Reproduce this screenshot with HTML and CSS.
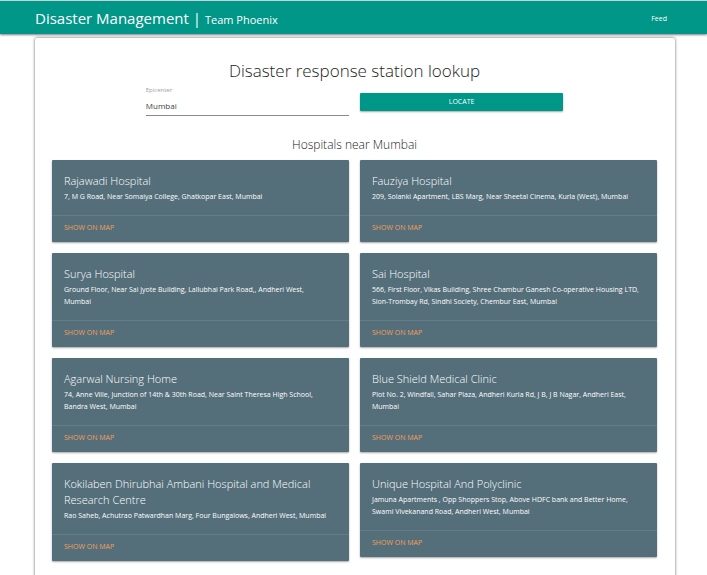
FILE: index.html
```html
<!DOCTYPE html>
<html lang="en">
<head>
<meta charset="utf-8">
<meta name="viewport" content="width=device-width, initial-scale=1">
<title>Disaster Management</title>
<link rel="stylesheet" href="styles.css">
</head>
<body>
<header class="navbar">
  <div class="brand">Disaster Management | <small class="team">Team Phoenix</small></div>
  <nav><a class="nav-link" href="#feed">Feed</a></nav>
</header>
<main class="panel">
  <h1 class="page-title">Disaster response station lookup</h1>
  <form class="lookup">
    <div class="field">
      <label class="field-label" for="epicenter">Epicenter</label>
      <input class="field-input" id="epicenter" type="text" value="Mumbai">
    </div>
    <button class="locate" type="button">LOCATE</button>
  </form>
  <h2 class="results-title">Hospitals near Mumbai</h2>
  <section class="cards">
    <article class="card">
      <div class="card-content"><h3 class="card-title">Rajawadi Hospital</h3><p class="address">7, M G Road, Near Somaiya College, Ghatkopar East, Mumbai</p></div>
      <div class="card-action"><a class="map-link" href="#map">SHOW ON MAP</a></div>
    </article>
    <article class="card">
      <div class="card-content"><h3 class="card-title">Fauziya Hospital</h3><p class="address">209, Solanki Apartment, LBS Marg, Near Sheetal Cinema, Kurla (West), Mumbai</p></div>
      <div class="card-action"><a class="map-link" href="#map">SHOW ON MAP</a></div>
    </article>
    <article class="card">
      <div class="card-content"><h3 class="card-title">Surya Hospital</h3><p class="address">Ground Floor, Near Sai Jyote Building, Lallubhai Park Road,, Andheri West,<br>Mumbai</p></div>
      <div class="card-action"><a class="map-link" href="#map">SHOW ON MAP</a></div>
    </article>
    <article class="card">
      <div class="card-content"><h3 class="card-title">Sai Hospital</h3><p class="address">566, First Floor, Vikas Building, Shree Chambur Ganesh Co-operative Housing LTD, Sion-Trombay Rd, Sindhi Society, Chembur East, Mumbai</p></div>
      <div class="card-action"><a class="map-link" href="#map">SHOW ON MAP</a></div>
    </article>
    <article class="card">
      <div class="card-content"><h3 class="card-title">Agarwal Nursing Home</h3><p class="address">74, Anne Ville, Junction of 14th &amp; 30th Road, Near Saint Theresa High School,<br>Bandra West, Mumbai</p></div>
      <div class="card-action"><a class="map-link" href="#map">SHOW ON MAP</a></div>
    </article>
    <article class="card">
      <div class="card-content"><h3 class="card-title">Blue Shield Medical Clinic</h3><p class="address">Plot No. 2, Windfall, Sahar Plaza, Andheri Kurla Rd, J B, J B Nagar, Andheri East,<br>Mumbai</p></div>
      <div class="card-action"><a class="map-link" href="#map">SHOW ON MAP</a></div>
    </article>
    <article class="card">
      <div class="card-content"><h3 class="card-title">Kokilaben Dhirubhai Ambani Hospital and Medical Research Centre</h3><p class="address">Rao Saheb, Achutrao Patwardhan Marg, Four Bungalows, Andheri West, Mumbai</p></div>
      <div class="card-action"><a class="map-link" href="#map">SHOW ON MAP</a></div>
    </article>
    <article class="card">
      <div class="card-content"><h3 class="card-title">Unique Hospital And Polyclinic</h3><p class="address">Jamuna Apartments , Opp Shoppers Stop, Above HDFC bank and Better Home,<br>Swami Vivekanand Road, Andheri West, Mumbai</p></div>
      <div class="card-action"><a class="map-link" href="#map">SHOW ON MAP</a></div>
    </article>
  </section>
</main>
</body>
</html>
```
FILE: styles.css
```css
* { box-sizing: border-box; }

body {
  margin: 0;
  background: #fff;
  color: #222;
  font-family: "Open Sans", "Noto Sans", sans-serif;
  font-size: 7px;
  line-height: 12px;
}

h1, h2, h3, p { margin: 0; }
a { text-decoration: none; }

.navbar {
  display: flex;
  align-items: center;
  justify-content: space-between;
  height: 34px;
  padding: 2px 40px 0 35px;
  border-top: 1px solid #c4d4d2;
  background: #009688;
  box-shadow: 0 1px 2px rgba(0, 0, 0, 0.5);
  color: #fff;
}
.brand { font-size: 15px; line-height: 20px; }
.team { font-size: 11px; }
.nav-link { color: #fff; }

.panel {
  margin: 4px 32px 12px 35px;
  padding: 20px 18px 40px 17px;
  border-radius: 2px;
  box-shadow: 0 0 3px rgba(0, 0, 0, 0.65);
}
.page-title {
  font-size: 17px;
  font-weight: 300;
  line-height: 26px;
  text-align: center;
}

.lookup {
  display: grid;
  grid-template-columns: 1fr 1fr;
  gap: 11px;
  width: 69%;
  margin: 0 auto;
}
.field { display: flex; flex-direction: column; }
.field-label {
  color: #9e9e9e;
  font-size: 6px;
  line-height: 12px;
}
.field-input {
  width: 100%;
  height: 20px;
  padding: 0;
  border: 0;
  border-bottom: 1px solid #8a8a8a;
  outline: 0;
  background: transparent;
  color: #444;
  font: inherit;
  font-size: 8px;
}
.locate {
  height: 18px;
  margin-top: 9px;
  padding: 0;
  border: 0;
  border-radius: 1px;
  background: #009688;
  box-shadow: 0 1px 2px rgba(0, 0, 0, 0.35);
  color: #fff;
  font: inherit;
}

.results-title {
  margin: 20px 0 6px;
  font-size: 12px;
  font-weight: 300;
  line-height: 18px;
  text-align: center;
}

.cards {
  display: grid;
  grid-template-columns: 1fr 1fr;
  align-items: start;
  gap: 11px;
}
.card {
  border-radius: 1px;
  background: #546e7a;
  box-shadow: 0 1px 2px rgba(0, 0, 0, 0.35);
  color: #fff;
}
.card-content { padding: 13px 12px 12px; }
.card-title {
  margin-bottom: 2px;
  font-size: 11px;
  font-weight: 300;
  line-height: 16px;
}
.card-action {
  padding: 6px 12px 8px;
  border-top: 1px solid #657d88;
}
.map-link {
  display: block;
  color: #f3a05c;
}
```
